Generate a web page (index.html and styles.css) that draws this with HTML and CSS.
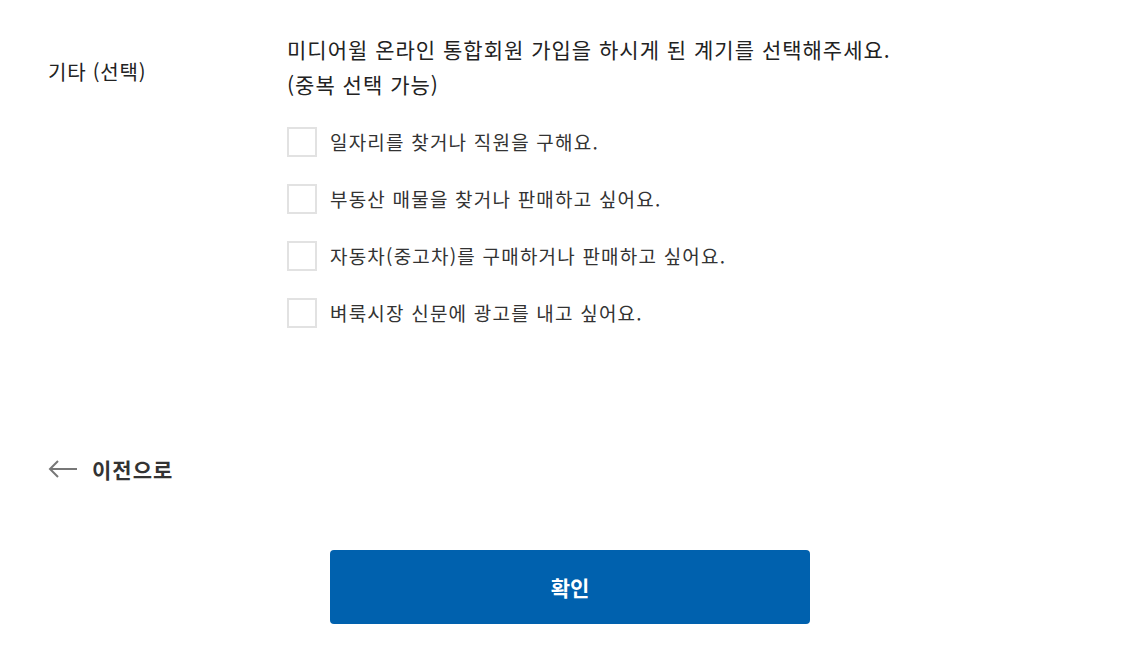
FILE: index.html
```html
<!DOCTYPE html>
<html lang="ko">
<head>
  <meta charset="UTF-8" />
  <meta name="viewport" content="width=device-width, initial-scale=1.0"/>
  <title>회원가입 - 가입 계기 선택</title>
  <link rel="stylesheet" href="styles.css">
</head>
<body>
  <div class="page">
    <div class="form-row">
      <div class="row-label">기타 (선택)</div>
      <div class="row-body">
        <p class="question">미디어윌 온라인 통합회원 가입을 하시게 된 계기를 선택해주세요.<br>(중복 선택 가능)</p>
        <ul class="options">
          <li><label class="option"><input type="checkbox"><span class="box"></span>일자리를 찾거나 직원을 구해요.</label></li>
          <li><label class="option"><input type="checkbox"><span class="box"></span>부동산 매물을 찾거나 판매하고 싶어요.</label></li>
          <li><label class="option"><input type="checkbox"><span class="box"></span>자동차(중고차)를 구매하거나 판매하고 싶어요.</label></li>
          <li><label class="option"><input type="checkbox"><span class="box"></span>벼룩시장 신문에 광고를 내고 싶어요.</label></li>
        </ul>
      </div>
    </div>

    <a class="back" href="#">
      <svg width="30" height="18" viewBox="0 0 30 18" fill="none" stroke="#777" stroke-width="2">
        <path d="M29 9H2"/>
        <path d="M10 1L2 9l8 8"/>
      </svg>
      이전으로
    </a>

    <div class="actions">
      <button class="confirm" type="button">확인</button>
    </div>
  </div>
</body>
</html>
```

FILE: styles.css
```css
body { margin: 0; background: #fff; color: #222; font-family: "Noto Sans CJK KR", "Noto Sans", sans-serif; }
.page { padding: 32px 0 0 48px; }
.form-row { display: grid; grid-template-columns: 239px 1fr; }
.row-label { font-size: 20px; line-height: 35px; padding-top: 22px; letter-spacing: 0.8px; }
.question { margin: 0; font-size: 21px; line-height: 35px; letter-spacing: 1px; }
.options { list-style: none; margin: 25px 0 0; padding: 0; display: flex; flex-direction: column; gap: 27px; }
.option { display: flex; align-items: center; gap: 13px; font-size: 19px; line-height: 30px; letter-spacing: 1.2px; color: #333; cursor: pointer; }
.option input { display: none; }
.box { width: 26px; height: 26px; border: 2px solid #e2e2e2; flex: none; }
.back { display: inline-flex; align-items: center; gap: 14px; margin-top: 127px; font-size: 21px; font-weight: 700; line-height: 28px; color: #333; text-decoration: none; letter-spacing: 1px; }
.actions { display: flex; justify-content: center; margin: 67px 0 0 -48px; padding-right: 1px; }
.confirm { width: 480px; height: 74px; background: #0061ae; color: #fff; border: none; border-radius: 4px; font-family: inherit; font-size: 21px; font-weight: 700; cursor: pointer; }
```
